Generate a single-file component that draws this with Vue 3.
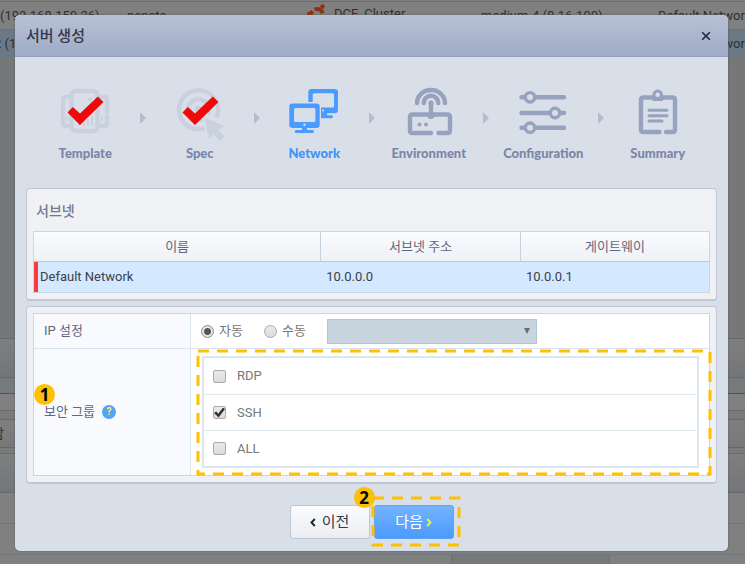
<script setup>
import { ref } from 'vue'

const steps = [
  { id: 'template', label: 'Template', state: 'done' },
  { id: 'spec', label: 'Spec', state: 'done' },
  { id: 'network', label: 'Network', state: 'active' },
  { id: 'environment', label: 'Environment', state: 'todo' },
  { id: 'configuration', label: 'Configuration', state: 'todo' },
  { id: 'summary', label: 'Summary', state: 'todo' },
]

const subnets = [{ name: 'Default Network', address: '10.0.0.0', gateway: '10.0.0.1' }]
const ipMode = ref('auto')
const groups = ref([
  { name: 'RDP', checked: false },
  { name: 'SSH', checked: true },
  { name: 'ALL', checked: false },
])
</script>

<template>
  <div class="page">
    <div class="backdrop" aria-hidden="true">
      <div class="line"></div>
      <div class="server-row">
        <span>(192.168.150.26)</span><span>penets</span>
        <span class="cluster">
          <svg class="ubuntu" viewBox="0 0 20 20"><circle cx="10" cy="11" r="6" fill="none" stroke="#8e3410" stroke-width="4" stroke-dasharray="10 2.5" /><circle cx="15.500" cy="2.500" r="2.300" fill="#8e3410" /><circle cx="2" cy="10" r="2.300" fill="#8e3410" /></svg>
          DCE_Cluster
        </span>
        <span>medium-4 (8-16-100)</span><span>Default Network</span>
      </div>
      <div class="server-row selected">
        <span>2 (1</span><span></span><span></span><span></span><span>Default Network</span>
      </div>
      <div class="blank"></div>
      <div class="toolbar"></div>
      <div class="strip"></div>
      <div class="plain"></div>
      <div class="thin"></div>
      <div class="tabs"><span>담</span></div>
      <div class="thin gap"></div>
      <div class="toolbar"></div>
      <div class="list-row"></div>
      <div class="list-row"></div>
      <div class="cells"><span></span><span></span><span></span></div>
    </div>

    <div class="overlay">
      <section class="modal" role="dialog" aria-labelledby="modal-title">
        <header class="modal-head">
          <h1 id="modal-title">서버 생성</h1>
          <button class="close" type="button" aria-label="닫기">
            <svg viewBox="0 0 10 10"><path d="M1.200 1.200L8.800 8.800M8.800 1.200L1.200 8.800" /></svg>
          </button>
        </header>

        <ol class="steps">
          <template v-for="(step, i) in steps" :key="step.id">
            <li v-if="i" class="arrow" aria-hidden="true">
              <svg viewBox="0 0 6 12"><path d="M0 0L6 6L0 12Z" /></svg>
            </li>
            <li class="step" :class="step.state">
              <svg class="icon" viewBox="0 0 52 54" aria-hidden="true">
                <g v-if="step.id === 'template'" class="art">
                  <rect x="12.500" y="4" width="26" height="40" rx="4" />
                  <path d="M12 10H7Q4 10 4 13V36Q4 39 7 39H12M39 10H45Q48 10 48 13V25M48 30V36Q48 39 45 39H39" />
                  <path class="fine" d="M20 33V39M25 31V39M29 32V39M33 29V39M8 29V34M43 29V34" />
                  <circle class="solid" cx="31" cy="12.500" r="2" />
                </g>
                <g v-else-if="step.id === 'spec'" class="art">
                  <path d="M29 41.700A19.500 19.500 0 1 1 43 29" />
                  <path d="M27 33A10.500 10.500 0 1 1 34.500 26" />
                  <circle class="solid" cx="24.500" cy="22.500" r="4" />
                  <path class="solid" d="M30 30L50.700 39.300L44.300 43L50.700 50L46 54L39.300 47L35 51.700Z" />
                </g>
                <g v-else-if="step.id === 'network'" class="art">
                  <path class="solid" fill-rule="evenodd" d="M4.500 16.500H28.500Q31.700 16.500 31.700 19.700V37.800Q31.700 41 28.500 41H19V43H24.500Q26 43 26 44.500T24.500 46H8.200Q6.700 46 6.700 44.500T8.200 43H14V41H4.500Q1.300 41 1.300 37.800V19.700Q1.300 16.500 4.500 16.500ZM7.500 21Q6 21 6 22.500V33.500Q6 35 7.500 35H26Q27.400 35 27.400 33.500V22.500Q27.400 21 26 21ZM16.500 36.600A1.200 1.200 0 1 0 16.500 39A1.200 1.200 0 1 0 16.500 36.600Z" />
                  <path class="solid" d="M20.300 15V5.200Q20.300 2 23.500 2H46.800Q50 2 50 5.200V23Q50 26.300 46.800 26.300H39V28.300H43.500Q45 28.300 45 29.800T43.500 31.300H33V20.500H45Q46 20.500 46 19.500V7.500Q46 6.300 44.800 6.300H26Q24.700 6.300 24.700 7.500V15Z" />
                  <circle cx="35" cy="23.500" r="1" class="light" />
                </g>
                <g v-else-if="step.id === 'environment'" class="art">
                  <path d="M28 46H9.500Q7 46 7 43.500V30Q7 27.500 9.500 27.500H44.500Q47 27.500 47 30V43.500Q47 46 44.500 46H35.500" />
                  <path d="M14 16A14 13 0 0 1 42 16M20.700 16A7.300 7.300 0 0 1 35.300 16" />
                  <path d="M28 16V29" />
                  <circle class="solid" cx="28" cy="16" r="2.600" /><circle class="solid" cx="28" cy="28.500" r="3.600" />
                  <circle class="solid" cx="16.500" cy="37.500" r="2" /><circle class="solid" cx="23" cy="37.500" r="2" />
                </g>
                <g v-else-if="step.id === 'configuration'" class="art">
                  <path d="M4.500 10.300H7.500M18 10.300H47M4.500 26H32M43.500 26H47M4.500 40.700H7.500M18 40.700H47" />
                  <g class="ring"><circle cx="13" cy="10.300" r="4.700" /><circle cx="38" cy="26" r="4.700" /><circle cx="13" cy="40.700" r="4.700" /></g>
                </g>
                <g v-else class="art">
                  <path d="M27.500 45H11.500Q9 45 9 42.500V13Q9 10.500 11.500 10.500H40.500Q43 10.500 43 13V42.500Q43 45 40.500 45H34" />
                  <path class="solid" d="M20.500 9H31V14H20.500Z" />
                  <circle class="clip" cx="25.700" cy="7.700" r="3.800" />
                  <path class="text-line" d="M17 23.300H35M17 28.700H35M17 34H30" />
                </g>
                <path v-if="step.state === 'done'" class="check" d="M8.500 25.500L13.800 20L21 26.500L38.800 9.500L44.500 15L21 38Z" />
              </svg>
              <span>{{ step.label }}</span>
            </li>
          </template>
        </ol>

        <section class="panel subnet">
          <h2>서브넷</h2>
          <table>
            <colgroup><col class="col-name" /><col class="col-address" /><col class="col-gateway" /></colgroup>
            <thead>
              <tr><th scope="col">이름</th><th scope="col">서브넷 주소</th><th scope="col">게이트웨이</th></tr>
            </thead>
            <tbody>
              <tr v-for="net in subnets" :key="net.name">
                <td>{{ net.name }}</td><td>{{ net.address }}</td><td>{{ net.gateway }}</td>
              </tr>
            </tbody>
          </table>
        </section>

        <section class="panel">
          <div class="form">
            <div class="form-label">IP 설정</div>
            <div class="ip">
              <label><input v-model="ipMode" type="radio" name="ip" value="auto" />자동</label>
              <label><input v-model="ipMode" type="radio" name="ip" value="manual" />수동</label>
              <div class="picker">
                <select aria-label="IP 주소" disabled></select>
                <svg viewBox="0 0 6 6" aria-hidden="true"><path d="M0 0H6L3 6Z" /></svg>
              </div>
            </div>
            <div class="form-label group-label">
              <span class="badge badge-one">1</span>
              보안 그룹
              <button class="help" type="button" aria-label="도움말">?</button>
            </div>
            <div class="groups">
              <ul>
                <li v-for="g in groups" :key="g.name">
                  <label><input v-model="g.checked" type="checkbox" />{{ g.name }}</label>
                </li>
              </ul>
              <svg class="dashes" aria-hidden="true"><rect width="100%" height="100%" /></svg>
            </div>
          </div>
        </section>

        <footer>
          <button class="btn" type="button">
            <svg viewBox="0 0 6 9" aria-hidden="true"><path d="M4.800 1L1.500 4.500L4.800 8" /></svg>이전
          </button>
          <div class="next">
            <button class="btn primary" type="button">
              다음<svg viewBox="0 0 6 9" aria-hidden="true"><path d="M1.200 1L4.500 4.500L1.200 8" /></svg>
            </button>
            <svg class="dashes" aria-hidden="true"><rect width="100%" height="100%" /></svg>
            <span class="badge badge-two">2</span>
          </div>
        </footer>
      </section>
    </div>
  </div>
</template>

<style>
body {
  margin: 0;
  background: #808080;
}
</style>

<style scoped>
* {
  box-sizing: border-box;
}
.page {
  position: relative;
  min-height: 100vh;
  overflow: hidden;
  font-family: Roboto, "Noto Sans CJK KR", sans-serif;
  font-size: 13px;
  line-height: 18px;
  color: #777;
}
button,
input,
select {
  font: inherit;
  margin: 0;
}
ul,
ol,
h1,
h2 {
  list-style: none;
  margin: 0;
  padding: 0;
}

/* dimmed page behind the dialog */
.backdrop {
  position: absolute;
  inset: 0;
  display: flex;
  flex-direction: column;
  overflow: hidden;
  color: #2e2e30;
}
.backdrop > div {
  flex: none;
}
.line {
  height: 2px;
  border-bottom: 1px solid #6a6b6c;
}
.server-row {
  display: grid;
  grid-template-columns: 127fr 180fr 174fr 177fr 87fr;
  height: 27px;
  align-items: center;
  white-space: nowrap;
}
.server-row span {
  min-width: 0;
}
.server-row.selected {
  height: 29px;
  background: #6a7985;
  border-top: 1px solid #5f7587;
}
.server-row.selected span:first-child {
  text-indent: -6px;
}
.cluster {
  display: flex;
  align-items: center;
  gap: 7px;
  padding-bottom: 4px;
}
.ubuntu {
  width: 20px;
  height: 20px;
}
.blank {
  height: 281px;
  background: #767779;
  border-bottom: 1px solid #626a6e;
}
.toolbar {
  height: 39px;
  background: linear-gradient(#7e7f7f, #737579);
  border-bottom: 1px solid #626a70;
}
.strip {
  height: 16px;
  background: #757a7d;
  border-bottom: 1px solid #4c5357;
}
.plain {
  height: 17px;
  border-bottom: 1px solid #646b70;
}
.thin {
  height: 9px;
  background: #797a7c;
  border-bottom: 1px solid #5f6b74;
}
.thin.gap {
  height: 6px;
}
.tabs {
  height: 28px;
  padding: 5px 0;
  background: linear-gradient(#7f7f80, #777879);
  border-bottom: 1px solid #5f6b74;
}
.tabs span {
  margin-left: -8px;
}
.list-row {
  height: 31px;
  border-bottom: 1px solid #6c777d;
}
.cells {
  display: grid;
  grid-template-columns: 451fr 159fr 135fr;
  height: 30px;
}
.cells span:nth-child(2) {
  background: #777879;
  border: 1px solid #6c6f71;
  border-width: 0 1px;
}

.overlay {
  position: relative;
  padding: 15px 17px 13px 15px;
}
.modal {
  background: #d9dfe9;
  border-radius: 5px;
  box-shadow: 0 0 2px #55585f;
  padding-bottom: 12px;
}
.modal-head {
  display: flex;
  align-items: center;
  justify-content: space-between;
  height: 42px;
  padding: 0 17px 0 11px;
  border-radius: 5px 5px 0 0;
  border-bottom: 1px solid #929dbc;
  background: linear-gradient(#b8c1d5, #9fabc7);
}
h1 {
  font-size: 15px;
  font-weight: 500;
  line-height: 22px;
  color: #34384a;
}
.close {
  display: flex;
  padding: 0;
  border: 0;
  background: none;
}
.close svg {
  width: 10px;
  height: 10px;
  fill: none;
  stroke: #23273a;
  stroke-width: 1.6;
}

.steps {
  display: flex;
  padding: 30px 16px 0;
}
.step {
  flex: 1 1 0;
  min-width: 0;
  display: flex;
  flex-direction: column;
  align-items: center;
  font: 900 13px/18px Lato, sans-serif;
  color: #7a86a8;
  --ink: #97a2bf;
}
.step.active {
  color: #3f93f7;
  --ink: #4a9bff;
}
.step.done {
  --ink: #cad1de;
}
.step span {
  margin-top: 3px;
}
.icon {
  width: 52px;
  height: 54px;
}
.art {
  fill: none;
  stroke: var(--ink);
  stroke-width: 4.4;
  stroke-linecap: round;
}
.art .solid {
  fill: var(--ink);
  stroke: none;
}
.art .light {
  fill: #d9dfe9;
  stroke: none;
}
.art .fine {
  stroke-width: 2;
  stroke-linecap: butt;
}
.art .ring {
  stroke-width: 3.4;
}
.art .clip {
  fill: #d9dfe9;
  stroke-width: 3;
}
.art .text-line {
  stroke-width: 3;
}
.check {
  fill: #ee0a0a;
}
.arrow {
  flex: 0 0 6px;
  padding-top: 25px;
}
.arrow svg {
  display: block;
  width: 6px;
  height: 12px;
  fill: #b4bccd;
}

.panel {
  margin: 5px 11px 0;
  padding: 6px;
  border: 1px solid #c0c6d6;
  border-bottom-width: 2px;
  border-radius: 4px;
  background: #f0f1f5;
}
.panel.subnet {
  margin-top: 26px;
}
h2 {
  padding: 7px 3px 11px;
  font-size: 14px;
  font-weight: 500;
  line-height: 18px;
  color: #73788c;
}
table {
  width: 100%;
  table-layout: fixed;
  border-collapse: separate;
  border-spacing: 0;
  border: 1px solid #c8d7e2;
}
.col-name {
  width: 42.4%;
}
.col-address {
  width: 29.6%;
}
.col-gateway {
  width: 28%;
}
th {
  height: 30px;
  padding: 0;
  font-weight: 400;
  color: #626780;
  background: linear-gradient(#fafbfd, #eef1f6);
  border-bottom: 1px solid #b9c8d5;
}
th + th {
  border-left: 1px solid #c3d2de;
}
td {
  height: 30px;
  padding: 0 6px;
  color: #3b3f48;
  background: #d4e9ff;
}
td:first-child {
  padding-left: 2px;
  border-left: 4px solid #f83c40;
}

.form {
  display: grid;
  grid-template-columns: 157px 1fr;
  border: 1px solid #c8d7e2;
  background: #fff;
}
.form-label {
  display: flex;
  align-items: center;
  padding-left: 10px;
  background: #f8fafd;
  border-right: 1px solid #d9e5ee;
  color: #626780;
}
.ip {
  display: flex;
  align-items: center;
  height: 35px;
  padding-left: 10px;
  gap: 21px;
}
.ip label {
  display: flex;
  align-items: center;
  gap: 5px;
}
.form > :nth-child(-n + 2) {
  border-bottom: 1px solid #d9e5ee;
}
input {
  appearance: none;
  width: 13px;
  height: 13px;
  flex: none;
  border: 1px solid #aaa;
  background: linear-gradient(#e9e9e9, #dcdcdc);
}
input[type="radio"] {
  border-radius: 50%;
}
input[type="radio"]:checked {
  border-color: #8b8b8b;
  background: radial-gradient(circle, #555 0 3px, #e6e6e6 4px);
}
input[type="checkbox"] {
  display: grid;
  place-items: center;
  border-radius: 2px;
}
input[type="checkbox"]:checked::after {
  content: "";
  width: 11px;
  height: 10px;
  background: #333;
  clip-path: polygon(0 55%, 20% 40%, 38% 62%, 82% 0, 100% 14%, 42% 100%);
}
.picker {
  position: relative;
  width: 210px;
  height: 25px;
}
.picker select {
  appearance: none;
  display: block;
  width: 100%;
  height: 100%;
  border: 1px solid #b4c6d2;
  border-radius: 0;
  background: #c8d4de;
  opacity: 1;
}
.picker svg {
  position: absolute;
  right: 7px;
  top: 9px;
  width: 6px;
  height: 6px;
  fill: #6c6c6c;
}
.group-label {
  position: relative;
  gap: 7px;
}
.help {
  width: 14px;
  height: 14px;
  padding: 0;
  border: 0;
  border-radius: 50%;
  background: #55a3fa;
  color: #f2f46b;
  font-size: 10px;
  font-weight: 700;
  line-height: 14px;
}
.groups {
  position: relative;
  padding: 7px 10px 7px 11px;
}
.groups ul {
  border: 2px solid #dce6ee;
}
.groups li {
  height: 36px;
}
.groups li + li {
  border-top: 1px solid #dfe9f0;
}
.groups label {
  display: flex;
  align-items: center;
  gap: 11px;
  height: 100%;
  padding-left: 9px;
}

footer {
  display: flex;
  justify-content: center;
  gap: 4px;
  padding-top: 21px;
}
.btn {
  display: flex;
  align-items: center;
  justify-content: center;
  gap: 6px;
  width: 80px;
  height: 34px;
  padding: 0;
  border: 1px solid #bfc6d6;
  border-radius: 3px;
  background: linear-gradient(#fbfbfd, #ebedf2);
  color: #34384a;
  font-size: 15px;
}
.btn svg {
  width: 6px;
  height: 9px;
  fill: none;
  stroke: #23273a;
  stroke-width: 2;
}
.btn.primary {
  gap: 3px;
  border-color: #5aa3f5;
  background: linear-gradient(#74b4ff, #4b9afb);
  color: #fff;
}
.btn.primary svg {
  stroke: #e8fb1c;
}
.next {
  position: relative;
}

/* callouts laid over the form */
.dashes {
  position: absolute;
  overflow: visible;
  pointer-events: none;
  fill: none;
  stroke: #fec002;
  stroke-width: 3;
  stroke-dasharray: 11 8;
}
.groups .dashes {
  left: 7px;
  top: 2px;
  width: calc(100% - 6px);
  height: calc(100% - 3px);
}
.next .dashes {
  left: -1px;
  top: -7px;
  width: 86px;
  height: 47px;
}
.badge {
  position: absolute;
  width: 21px;
  height: 21px;
  border-radius: 50%;
  background: #fec002;
  color: #000;
  font: 700 17px/21px "Noto Sans", sans-serif;
  text-align: center;
}
.badge-one {
  left: 0;
  top: 35px;
}
.badge-two {
  left: -20px;
  top: -18px;
}
</style>
